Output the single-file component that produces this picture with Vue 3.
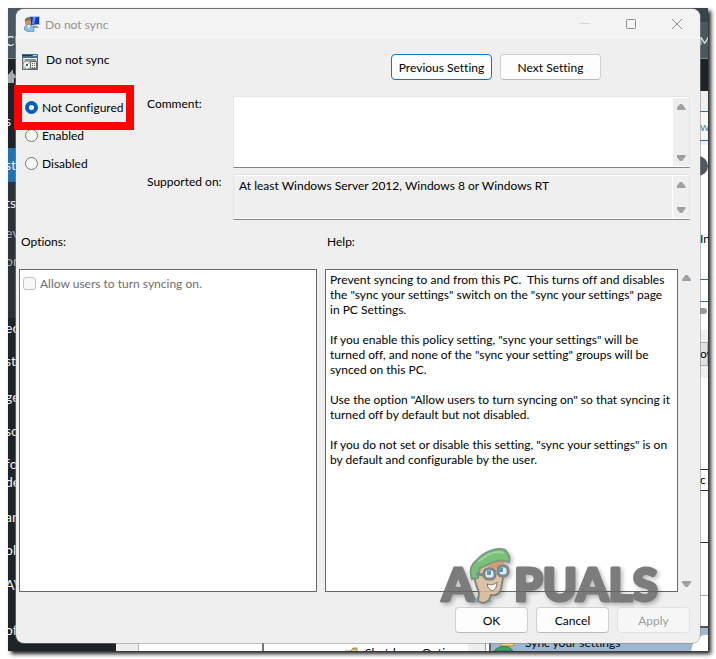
<script setup>
import { ref } from 'vue'

const states = ['Not Configured', 'Enabled', 'Disabled']
const state = ref('Not Configured')
const comment = ref('')
const supported = ref('At least Windows Server 2012, Windows 8 or Windows RT')
const allowSync = ref(false)

const help = [
  ['Prevent syncing to and from this PC.  This turns off and disables', 'the "sync your settings" switch on the "sync your settings" page', 'in PC Settings.'],
  ['If you enable this policy setting, "sync your settings" will be', 'turned off, and none of the "sync your setting" groups will be', 'synced on this PC.'],
  ['Use the option "Allow users to turn syncing on" so that syncing it', 'turned off by default but not disabled.'],
  ['If you do not set or disable this setting, "sync your settings" is on', 'by default and configurable by the user.'],
]

// pieces of the pages that show around the dialog
const leftBits = [
  { text: 'CU', top: 32 }, { text: 's', top: 112 }, { text: 'st', top: 156 },
  { text: 'ts', top: 194 }, { text: 'ev', top: 224, dim: true }, { text: 'ori', top: 252, dim: true },
  { text: 'ec', top: 319 }, { text: 'st', top: 352 }, { text: 'ge', top: 388 },
  { text: 'so', top: 422 }, { text: 'fo', top: 455 }, { text: 'de', top: 473 },
  { text: 'an', top: 508 }, { text: 'ol', top: 541 }, { text: 'AV', top: 576 }, { text: 'of', top: 621 },
]
const rightBits = [
  { text: 'My', top: 32, kind: 'light' }, { text: 'w', top: 118, kind: 'link' },
  { text: 'In', top: 230 }, { text: 'ow', top: 345 }, { text: 'c', top: 471 },
]
</script>

<template>
  <div class="page">
    <div class="desktop">
      <div class="back-left" aria-hidden="true">
        <i class="band head"></i><i class="band current"></i><i class="band sub"></i>
        <svg class="home" width="8" height="16" viewBox="0 0 8 16"><path d="M0 8 5 2v4l3 3v2H6v5H0z" fill="#a7aaad" /></svg>
        <span v-for="bit in leftBits" :key="bit.top" :class="{ dim: bit.dim }" :style="{ top: bit.top - 8 + 'px' }">{{ bit.text }}</span>
      </div>
      <div class="back-right" aria-hidden="true">
        <i class="r-head"></i><i class="r-black"></i><i class="r-box"></i><i class="r-round"></i>
        <i class="r-field"></i><i class="r-thumb"></i><i class="r-button"></i><i class="r-line"></i><i class="r-line low"></i><i class="r-foot"></i>
        <span v-for="bit in rightBits" :key="bit.top" :class="bit.kind" :style="{ top: bit.top - 8 + 'px' }">{{ bit.text }}</span>
      </div>
      <div class="back-bottom" aria-hidden="true">
        <i class="b-gray"></i><i class="b-list"></i><i class="b-tree"></i><i class="b-scroll"></i><i class="b-blue"></i>
        <svg class="b-folder" width="14" height="8" viewBox="0 0 14 8"><path d="M1 8V4h6l2-3h4v7z" fill="#f4d57a" stroke="#b38b36" /><path d="M9 2h3" stroke="#3c9ae0" /></svg>
        <span class="b-shut">Shutdown Options</span>
        <svg class="b-green" width="26" height="8" viewBox="0 0 26 8"><path d="M9 0h13v3H9z" fill="#f4d57a" stroke="#b38b36" /><path d="M2 8c4-5 14-7 19 0z" fill="#3aa564" stroke="#396b62" /></svg>
        <span class="b-sync">Sync your settings</span>
      </div>

      <main class="dialog">
        <header class="titlebar">
          <svg width="16" height="16" viewBox="0 0 16 16" aria-hidden="true">
            <path d="M5 0h11v9l-10 1z" fill="#b9c7d8" /><path d="M6 1h9v7l-8 1z" fill="#1438c4" />
            <path d="M9 1h3l-2 7H8z" fill="#5f91f4" /><path d="M9 10h4l2 2H9z" fill="#8296af" />
            <ellipse cx="4" cy="6" rx="3" ry="4" fill="#c79467" /><path d="M1 6c-1-6 7-6 6-1L5 4 2 5z" fill="#8a6a4c" />
            <path d="M0 13c0-3 3-4 5-4s5 2 5 6c-3 2-7 1-10-2z" fill="#8fbfe2" stroke="#5b92bb" /><path d="m3 9 2 4 1-4z" fill="#fff" />
          </svg>
          <span class="title">Do not sync</span>
          <div class="window-buttons">
            <button aria-label="Minimize" disabled><svg width="12" height="12" viewBox="0 0 12 12"><path d="M1 5.5h10" stroke="#d8d8d8" /></svg></button>
            <button aria-label="Maximize"><svg width="12" height="12" viewBox="0 0 12 12"><rect x="1.5" y="1.5" width="9" height="9" rx="1" fill="none" stroke="#909090" /></svg></button>
            <button aria-label="Close"><svg width="12" height="12" viewBox="0 0 12 12"><path d="m1 1 10 10M11 1 1 11" stroke="#8c8c8c" /></svg></button>
          </div>
        </header>

        <section class="heading">
          <svg width="16" height="16" viewBox="0 0 16 16" aria-hidden="true">
            <path d="M0 0h16v16H0z" fill="#666b70" /><path d="M1 5h14v10H1z" fill="#c9ccca" />
            <path d="M0 0h16v4H0z" fill="#3d7480" /><path d="M0 1.5h10" stroke="#25305e" /><path d="M11 1.5h4" stroke="#c2d3dc" />
            <path d="M1 4.5h14" stroke="#eee" /><path d="M3 6h11" stroke="#55606a" />
            <circle cx="5" cy="11" r="4" fill="#f1f3f1" stroke="#9aa29f" /><path d="m5 11 3-3M5 11l-3 3" stroke="#7cc2a0" /><circle cx="5" cy="11" r="1" fill="#333" />
            <path d="M8.500 7.500h6v7h-6z" fill="#fff6cf" stroke="#646a74" /><path d="M10 9.500h3M10 11.500h3M10 13.500h3" stroke="#5d6472" stroke-dasharray="1 1" />
          </svg>
          <h1>Do not sync</h1>
          <div class="nav">
            <button class="btn wide focused">Previous Setting</button>
            <button class="btn wide">Next Setting</button>
          </div>
        </section>

        <section class="settings">
          <div class="states" role="radiogroup" aria-label="State">
            <label v-for="s in states" :key="s" :class="{ marked: s === 'Not Configured' }">
              <input type="radio" name="state" v-model="state" :value="s" />
              <span>{{ s }}</span>
            </label>
          </div>
          <label for="comment">Comment:</label>
          <div class="field comment">
            <textarea id="comment" v-model="comment"></textarea>
            <div class="scroll"><i class="up"></i><i class="down"></i></div>
          </div>
          <label for="supported">Supported on:</label>
          <div class="field supported">
            <textarea id="supported" :value="supported" readonly></textarea>
            <div class="scroll"><i class="up"></i><i class="down"></i></div>
          </div>
        </section>

        <section class="panes">
          <h2>Options:</h2>
          <h2>Help:</h2>
          <div class="pane options">
            <label>
              <input type="checkbox" v-model="allowSync" :disabled="state !== 'Enabled'" />
              <span>Allow users to turn syncing on.</span>
            </label>
          </div>
          <div class="pane help">
            <p v-for="(lines, i) in help" :key="i">{{ lines.join('\n') }}</p>
          </div>
          <div class="scroll tall"><i class="up"></i><i class="down"></i></div>
        </section>

        <footer>
          <button class="btn">OK</button>
          <button class="btn">Cancel</button>
          <button class="btn" disabled>Apply</button>
        </footer>

        <svg class="watermark" width="232" height="64" viewBox="0 0 232 64" aria-label="APPUALS">
          <g class="letters">
            <text x="4" y="56">A</text>
            <text x="76" y="56">PUALS</text>
          </g>
          <path d="M36 57c2-5 5-6 7-7l8 3 3 4z" fill="#4aa9bd" />
          <path d="M37 30c-1 9 3 12 4 19l-1 7c4 3 8 2 11-1l2-5c6 1 9-2 10-6l4-23-14-5-15 7z" fill="#d8b893" stroke="#77706a" stroke-width="2" />
          <path d="M55 16c5-3 10-1 11 1l-1 5-11 2-9 3z" fill="#d08a5c" />
          <path d="M34 34c-3-9-1-14 5-19C46 7 58 2 67 5c4 4 5 8 4 12-11-5-20 3-29 6l-2 10z" fill="#62b765" stroke="#688568" stroke-width="2" />
          <path d="M40 17c9-8 18-12 26-9" stroke="#8ace87" stroke-width="2" fill="none" />
          <g fill="#dfe8ea" stroke="#6a747a" stroke-width="3"><rect x="46" y="24" width="11" height="10" rx="4" /><rect x="60" y="21" width="10" height="10" rx="4" /><path d="m38 29 8 1" /></g>
          <path d="M51 26v4M63 23v4" stroke="#388ba5" stroke-width="4" />
          <path d="M49 39c5 2 8 0 10-2 0 9-6 11-9 5z" fill="#fff" stroke="#5d5752" stroke-width="1" />
        </svg>
      </main>
    </div>
  </div>
</template>

<style>
body {
  margin: 0;
  background: #fff;
}
</style>

<style scoped>
* {
  box-sizing: border-box;
}
.page {
  min-height: 100vh;
  padding: 8px;
  display: flex;
  font: 12px/15px Lato, "Open Sans", sans-serif;
  font-variant-ligatures: none;
  color: #000;
}
.desktop {
  position: relative;
  flex: 1;
  display: flex;
  min-width: 0;
  padding: 1px 8px 8px;
  background: #47585f;
  box-shadow: 3px 3px 4px #222;
}
button, textarea {
  font: inherit;
  font-variant-ligatures: none;
  color: inherit;
}
h1, h2, p {
  margin: 0;
  font-size: 12px;
  font-weight: 400;
}

/* what lies behind the dialog */
.back-left, .back-right, .back-bottom {
  position: absolute;
  overflow: hidden;
}
.back-left {
  inset: 0 auto 0 0;
  width: 16px;
  background: #1d2327;
  color: #f0f0f1;
}
.back-right {
  inset: 0 0 0 auto;
  width: 16px;
  background: #fff;
}
.back-bottom {
  inset: auto 0 0 0;
  height: 16px;
  background: linear-gradient(90deg, #1d2327 108px, #fff 108px);
}
.back-left span, .back-right span, .back-bottom span, .desktop i, .home, .b-folder, .b-green {
  position: absolute;
}
.back-left span {
  left: -3px;
  font-size: 14px;
  line-height: 18px;
}
.back-left .dim {
  color: #a7aaad;
}
.home {
  top: 59px;
  left: 0;
}
.band {
  left: 0;
  width: 16px;
}
.head {
  top: 0;
  height: 51px;
  background: #47585f;
  border-bottom: 1px solid #7d898e;
}
.current {
  top: 140px;
  height: 34px;
  background: #2271b1;
}
.sub {
  top: 174px;
  height: 136px;
  background: #2c3338;
}
.back-right span {
  left: 8px;
  line-height: 18px;
}
.back-right .light {
  left: 7px;
  color: #fff;
}
.back-right .link {
  color: #4e82b2;
}
.back-right i {
  left: 0;
  width: 16px;
}
.r-head {
  top: 0;
  height: 51px;
  background: #47585f;
  border-top: 14px solid #36464d;
  border-bottom: 1px solid #7d898e;
}
.r-black {
  top: 51px;
  height: 32px;
  background: #1d2327;
}
.r-box {
  top: 103px;
  height: 30px;
  background: #f6f7f7;
  border-top: 1px solid #2271b1;
  border-bottom: 1px solid #2271b1;
  box-shadow: 0 0 0 20px #f0f0f1;
  clip-path: inset(-20px 0 -4px);
}
.back-right .r-round {
  top: 148px;
  left: -4px;
  width: 20px;
  height: 20px;
  border-radius: 50%;
  background: #50575e;
}
.r-field {
  top: 271px;
  height: 23px;
  border-top: 1px solid #2271b1;
  border-bottom: 1px solid #2271b1;
}
.back-right .r-thumb {
  top: 300px;
  width: 15px;
  height: 6px;
  border-radius: 3px;
  background: #999;
}
.r-button {
  top: 334px;
  height: 24px;
  background: #e1e1e1;
  border: 1px solid #adadad;
  box-shadow: 0 0 0 12px #f0f0f0;
}
.r-line {
  top: 461px;
  height: 22px;
  border-top: 1px solid #333;
  border-bottom: 1px solid #333;
}
.low {
  top: 534px;
  height: 54px;
  border-bottom-color: #aab;
}
.r-foot {
  top: 618px;
  height: 26px;
  background: #9db8d2;
  border-top: 2px solid #555;
}
.back-bottom i {
  top: 0;
  height: 16px;
}
.b-gray {
  left: 108px;
  width: 23px;
  background: #eee;
  border-right: 1px solid #bbb;
}
.b-list {
  left: 131px;
  width: 125px;
  border-right: 2px solid #777;
}
.b-tree {
  left: 256px;
  width: 204px;
}
.b-scroll {
  left: 460px;
  width: 18px;
  background: #eee;
  border-right: 1px solid #999;
}
.b-blue {
  left: 481px;
  right: 0;
  background: radial-gradient(circle at 100% 100%, #fff 16px, #9db8d2 17px);
  border-left: 2px solid #666;
}
.b-folder {
  left: 336px;
  top: 12px;
}
.b-shut {
  left: 357px;
  top: 10px;
}
.b-green {
  left: 484px;
  top: 8px;
}
.b-sync {
  left: 517px;
  top: 0;
}

.dialog {
  position: relative;
  flex: 1;
  min-width: 0;
  display: flex;
  flex-direction: column;
  background: #efefef;
  border-radius: 8px;
  box-shadow: 0 0 0 1px #8888;
}
.titlebar {
  display: flex;
  align-items: center;
  height: 30px;
  padding-left: 8px;
  gap: 5px;
  background: #f3f3f3;
  border-radius: 8px 8px 0 0;
  color: #929292;
}
.window-buttons {
  display: flex;
  margin-left: auto;
}
.window-buttons button {
  display: grid;
  place-items: center;
  width: 46px;
  height: 28px;
  padding: 0;
  border: 0;
  background: none;
}
.heading {
  display: flex;
  padding: 15px 99px 0 6px;
  gap: 8px;
}
.heading h1 {
  line-height: 12px;
}
.nav {
  display: flex;
  gap: 8px;
  margin-left: auto;
}
.btn {
  width: 73px;
  height: 26px;
  padding: 0;
  background: #fdfdfd;
  border: 1px solid #d0d0d0;
  border-bottom-color: #bababa;
  border-radius: 4px;
}
.wide {
  width: 101px;
}
.focused {
  border-color: #0078d4;
}
.btn:disabled {
  color: #a0a0a0;
  background: #f6f6f6;
  border-color: #e3e3e3;
}

.settings {
  display: grid;
  grid-template-columns: 114px 78px 1fr;
  grid-template-rows: 72px 46px;
  gap: 6px 8px;
  padding: 16px 10px 0 9px;
  white-space: nowrap;
}
.states {
  grid-row: span 2;
}
.states label {
  position: relative;
  display: flex;
  align-items: center;
  gap: 4px;
  height: 28px;
}
.states .marked {
  height: 22px;
  margin-bottom: 3px;
}
.marked::after {
  content: "";
  position: absolute;
  inset: -11px 5px -12px -11px;
  border: 8px solid #f00;
  pointer-events: none;
  z-index: 1;
}
input {
  appearance: none;
  flex: none;
  width: 13px;
  height: 13px;
  margin: 0;
  background: #f8f8f8;
  border: 1px solid #777;
}
input[type=radio] {
  border-radius: 50%;
}
input[type=radio]:checked {
  background: #fff;
  border: 4px solid #005fb8;
}
input[type=checkbox] {
  border-color: #c0c0c0;
  border-radius: 3px;
}
input[type=checkbox]:checked {
  background: #005fb8;
}
.field {
  display: flex;
  border: 1px solid #e6e6e6;
  border-bottom-color: #858585;
  background: #fff;
}
textarea {
  flex: 1;
  min-width: 0;
  padding: 2px 5px;
  border: 0;
  outline: 0;
  resize: none;
  overflow: hidden;
  background: #fff;
}
.supported textarea {
  margin: 1px 0;
  background: #efefef;
}
.scroll {
  display: flex;
  flex-direction: column;
  justify-content: space-between;
  align-items: center;
  width: 16px;
  margin: 1px 0 1px 1px;
  padding: 6px 0 5px;
  background: #efefef;
}
.scroll .up, .scroll .down {
  position: static;
  width: 9px;
  height: 6px;
  background: #a0a0a0;
  clip-path: polygon(38% 0, 62% 0, 100% 75%, 100% 100%, 0 100%, 0 75%);
}
.scroll .down {
  clip-path: polygon(0 0, 100% 0, 100% 25%, 62% 100%, 38% 100%, 0 25%);
}

.panes {
  flex: 1;
  display: grid;
  grid-template-columns: 306fr 353fr 17px;
  grid-template-rows: 15px 1fr;
  row-gap: 20px;
  padding: 14px 5px 0 3px;
}
.panes h2 {
  padding-left: 2px;
}
.pane {
  grid-row: 2;
  min-width: 0;
  border: 1px solid #686868;
  background: #fff;
}
.options {
  margin-right: 8px;
  padding: 6px 3px;
  color: #6d6d6d;
}
.options label {
  display: flex;
  align-items: center;
  gap: 4px;
}
.help {
  display: flex;
  flex-direction: column;
  gap: 15px;
  padding: 2px 4px;
}
.help p {
  white-space: pre;
}
.tall {
  grid-area: 2 / 3;
  width: 17px;
  margin: 0;
}
footer {
  display: flex;
  justify-content: flex-end;
  gap: 8px;
  padding: 15px 10px 10px;
}
.watermark {
  position: absolute;
  right: 30px;
  bottom: 34px;
  opacity: 0.85;
  pointer-events: none;
  filter: drop-shadow(2px 2px 2px #0005);
}
.letters {
  font: 900 46px Lato, sans-serif;
  fill: #666;
  stroke: #666;
  stroke-width: 3;
  stroke-linejoin: round;
}
</style>
